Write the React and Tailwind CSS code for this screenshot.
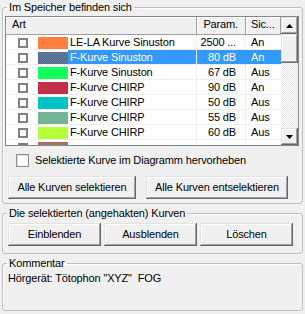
import React from "react";

const rows = [
  { name: "LE-LA Kurve Sinuston", p: "2500 ...", s: "An", c: "bg-[#ff8040]" },
  { name: "F-Kurve Sinuston", p: "80 dB", s: "An", c: "bg-[repeating-conic-gradient(#4a6796_0_25%,#6f7d96_0_50%)] bg-[length:2px_2px]", sel: true },
  { name: "F-Kurve Sinuston", p: "67 dB", s: "Aus", c: "bg-[#14ff5c]" },
  { name: "F-Kurve CHIRP", p: "90 dB", s: "An", c: "bg-[#c3304a]" },
  { name: "F-Kurve CHIRP", p: "50 dB", s: "Aus", c: "bg-[#00c4c4]" },
  { name: "F-Kurve CHIRP", p: "55 dB", s: "Aus", c: "bg-[#72b494]" },
  { name: "F-Kurve CHIRP", p: "60 dB", s: "Aus", c: "bg-[#b4ff3c]" },
  { name: "", p: "", s: "", c: "bg-[#a87060]" },
];

const raised =
  "bg-[#f0f0f0] shadow-[inset_-1px_-1px_#696969,inset_1px_1px_#e3e3e3,inset_-2px_-2px_#a0a0a0,inset_2px_2px_#ffffff]";

function Btn({ w, children }) {
  return (
    <div className={`h-[23px] ${w} ${raised} flex items-center justify-center`}>
      {children}
    </div>
  );
}

function Arrow({ up }) {
  return (
    <svg width="7" height="4" viewBox="0 0 7 4">
      {up ? <path d="M0 4 L3.5 0 L7 4 Z" fill="#000" /> : <path d="M0 0 L3.5 4 L7 0 Z" fill="#000" />}
    </svg>
  );
}

function Row({ r }) {
  const sel = r.sel;
  return (
    <div className="flex h-[15px] shrink-0">
      <div className="w-[191px] flex items-start border-r border-b border-[#f0f0f0]">
        <div className="ml-[12px] mt-[3px] w-[10px] h-[10px] border-2 border-[#808080] bg-white" />
        <div className={`ml-[10px] mt-[2px] w-[30px] h-[12px] ${r.c}`} />
        <div className={`flex-1 h-[14px] pl-[2px] pt-[1px] whitespace-nowrap overflow-hidden ${sel ? "bg-[#3399ff] text-white" : ""}`}>
          {r.name}
        </div>
      </div>
      <div className={`w-[49px] h-[15px] border-r border-b pr-[9px] pt-[1px] text-right whitespace-nowrap ${sel ? "bg-[#3399ff] text-white border-r-[#3399ff] border-b-[#f0f0f0]" : "border-[#f0f0f0]"}`}>
        {r.p}
      </div>
      <div className={`w-[35px] h-[15px] border-b pl-[5px] pt-[1px] ${sel ? "bg-[#3399ff] text-white border-[#f0f0f0]" : "border-[#f0f0f0]"}`}>
        {r.s}
      </div>
    </div>
  );
}

function ListView() {
  return (
    <div className="w-[294px] h-[130px] border border-[#828790] bg-white flex overflow-hidden">
      <div className="w-[275px] flex flex-col overflow-hidden">
        <div className="h-[18px] shrink-0 flex bg-[#f0f0f0] border-b border-[#a0a0a0]">
          <div className="w-[191px] border-r border-[#a0a0a0] shadow-[inset_1px_1px_#ffffff] pl-[6px] pt-[1px]">Art</div>
          <div className="w-[49px] border-r border-[#a0a0a0] shadow-[inset_1px_1px_#ffffff] pr-[7px] pt-[1px] text-right">Param.</div>
          <div className="w-[35px] border-r border-[#a0a0a0] shadow-[inset_1px_1px_#ffffff] pl-[5px] pt-[1px]">Sic...</div>
        </div>
        {rows.map((r, i) => (
          <Row key={i} r={r} />
        ))}
      </div>
      <div className="w-[17px] flex flex-col bg-[repeating-conic-gradient(#ffffff_0_25%,#e6e6e6_0_50%)] bg-[length:2px_2px]">
        <div className={`h-[17px] shrink-0 ${raised} flex items-center justify-center`}>
          <Arrow up />
        </div>
        <div className={`h-[29px] shrink-0 ${raised}`} />
        <div className="flex-1" />
        <div className={`h-[17px] shrink-0 ${raised} flex items-center justify-center`}>
          <Arrow />
        </div>
      </div>
    </div>
  );
}

const fs = "mx-[2px] p-0 border border-[#c0c0c0] rounded-[3px] shadow-[inset_1px_1px_#ffffff]";
const lg = "ml-[4px] px-[2px] p-0 leading-[13px]";

export default function App() {
  return (
    <div className="w-[305px] h-[314px] bg-[#f0f0f0] pt-[1px] text-black text-[11px] leading-[13px] tracking-[-0.15px] font-['Liberation_Sans',Arial,sans-serif] overflow-hidden">
      <fieldset className={fs}>
        <legend className={lg}>Im Speicher befinden sich</legend>
        <div className="pl-[2px] pr-[3px] pt-[2px] pb-[4px]">
          <ListView />
          <div className="mt-[8px] ml-[11px] flex items-start">
            <div className="w-[13px] h-[13px] border border-[#8e8f8f] bg-white shadow-[inset_1px_1px_#dcdcdc,inset_-1px_-1px_#f4f4f4]" />
            <div className="ml-[6px]">Selektierte Kurve im Diagramm hervorheben</div>
          </div>
          <div className="mt-[9px] ml-[3px] flex gap-[10px]">
            <Btn w="w-[128px]">Alle Kurven selektieren</Btn>
            <Btn w="w-[142px]">Alle Kurven entselektieren</Btn>
          </div>
        </div>
      </fieldset>

      <fieldset className={`${fs} mt-[3px]`}>
        <legend className={lg}>Die selektierten (angehakten) Kurven</legend>
        <div className="pl-[5px] pt-[3px] pb-[7px] flex gap-[3px]">
          <Btn w="w-[93px]">Einblenden</Btn>
          <Btn w="w-[93px]">Ausblenden</Btn>
          <Btn w="w-[93px]">Löschen</Btn>
        </div>
      </fieldset>

      <fieldset className={`${fs} mt-[3px]`}>
        <legend className={lg}>Kommentar</legend>
        <div className="h-[40px] pl-[5px] pt-[2px] whitespace-pre">Hörgerät: Tötophon "XYZ"  FOG</div>
      </fieldset>
    </div>
  );
}
